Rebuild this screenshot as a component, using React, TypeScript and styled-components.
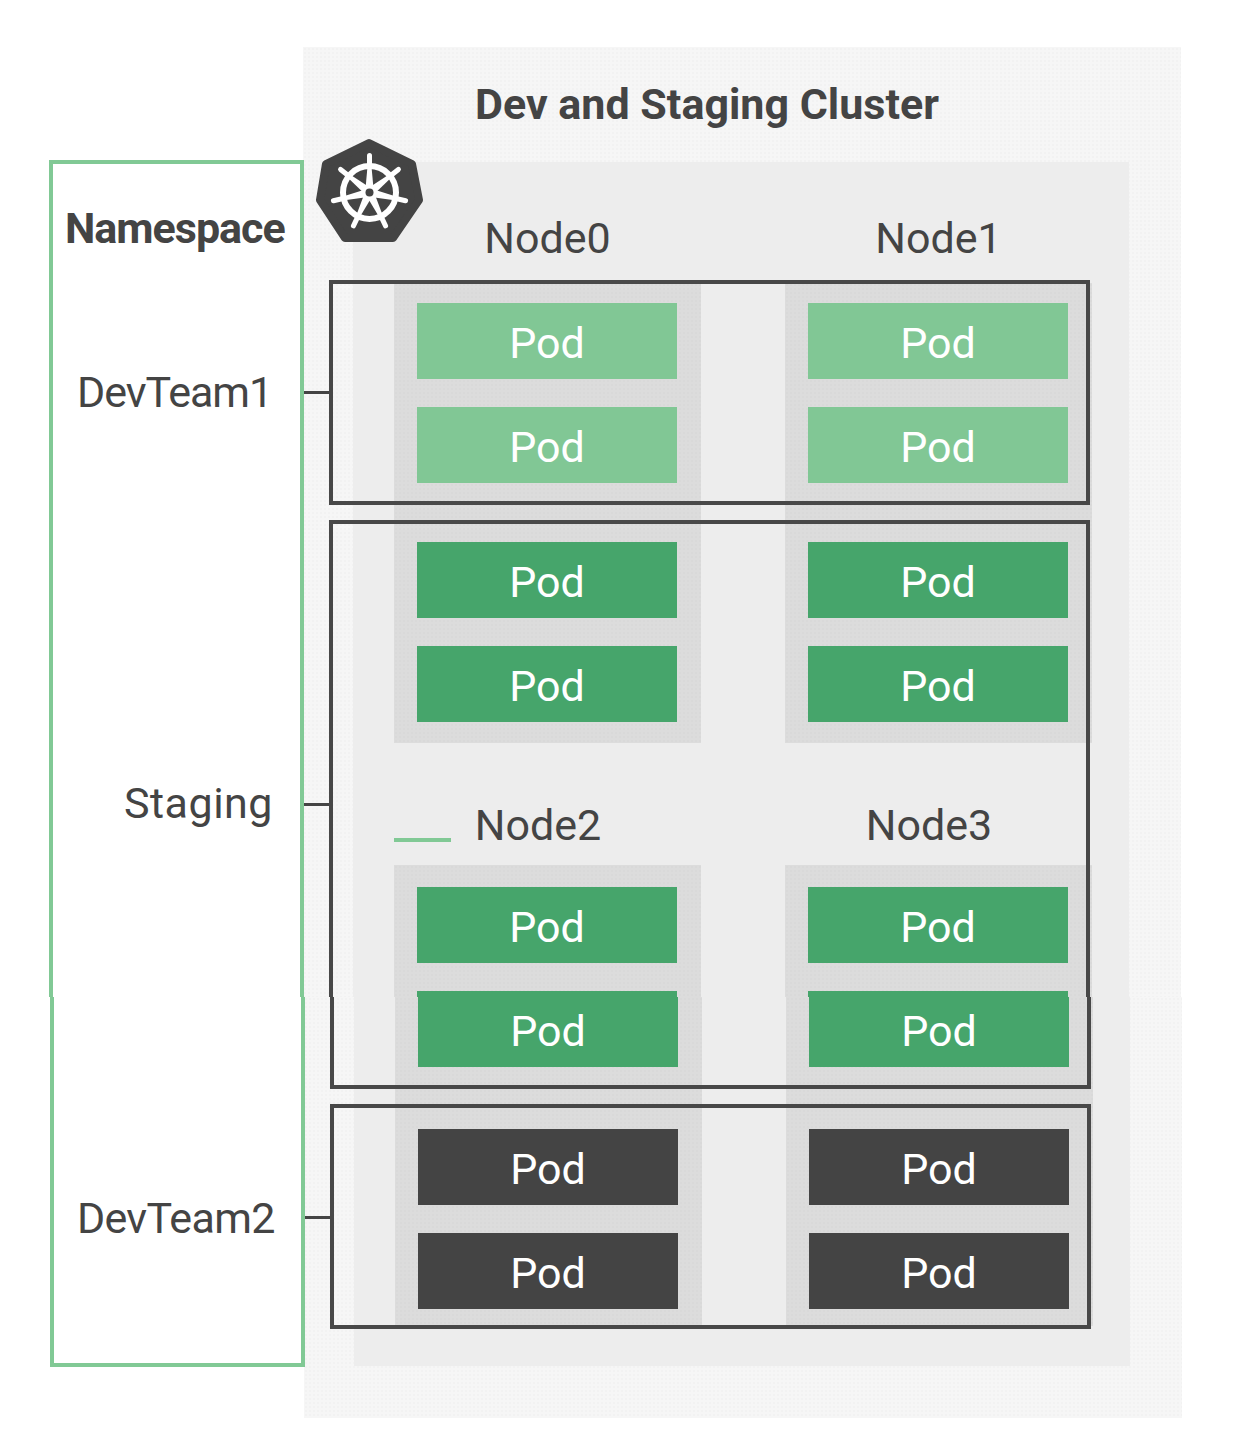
import React from 'react';
import styled, { createGlobalStyle } from 'styled-components';

const GlobalStyle = createGlobalStyle`
  html, body {
    margin: 0;
    padding: 0;
    background: #ffffff;
    font-family: Roboto, "Liberation Sans", sans-serif;
    color: #444444;
  }
`;

const dots = `radial-gradient(rgba(0, 0, 0, 0.014) 1px, transparent 1px)`;

// the source picture is two pieces with a 1px shift at y=997, so the page is two slices
const Slice = styled.section<{ $height: number; $lower?: boolean }>`
  position: relative;
  display: flex;
  align-items: flex-start;
  box-sizing: border-box;
  width: 1236px;
  height: ${({ $height }) => $height}px;
  margin-left: ${({ $lower }) => ($lower ? 1 : 0)}px;
  padding: ${({ $lower }) => ($lower ? 0 : 47)}px 0 0 49px;
  overflow: hidden;
`;

const Namespace = styled.div<{ $lower?: boolean }>`
  position: relative;
  z-index: 1;
  flex: none;
  display: flex;
  flex-direction: column;
  box-sizing: border-box;
  width: 255px;
  height: ${({ $lower }) => ($lower ? '370px' : '1000px')};
  margin-top: ${({ $lower }) => ($lower ? 0 : 113)}px;
  margin-right: -1px;
  border: 4px solid #81c995;
  border-top-width: ${({ $lower }) => ($lower ? 0 : 4)}px;
  border-bottom-width: ${({ $lower }) => ($lower ? 4 : 0)}px;
`;

const NamespaceTitle = styled.div`
  margin: 39px 0 0 12px;
  font-size: 43px;
  line-height: 50px;
  font-weight: 700;
  letter-spacing: -1px;
  white-space: nowrap;
`;

const TeamLabel = styled.div<{ $top: number; $left: number; $spacing?: number }>`
  margin: ${({ $top }) => $top}px 0 0 ${({ $left }) => $left}px;
  font-size: 43px;
  line-height: 50px;
  letter-spacing: ${({ $spacing }) => $spacing ?? 0}px;
  white-space: nowrap;
`;

const Cluster = styled.div<{ $lower?: boolean }>`
  flex: none;
  box-sizing: border-box;
  width: 878px;
  height: ${({ $lower }) => ($lower ? '421px' : '1000px')};
  background-color: #f6f6f6;
  background-image: ${dots};
  background-size: 4px 4px;
`;

const ClusterTitle = styled.h1`
  display: flex;
  align-items: center;
  box-sizing: border-box;
  height: 115px;
  margin: 0;
  padding: 0 0 2px 172px;
  font-size: 43px;
  font-weight: 700;
  color: #444444;
  white-space: nowrap;
`;

const InnerPanel = styled.div<{ $height?: number }>`
  box-sizing: border-box;
  width: 776px;
  height: ${({ $height }) => ($height ? `${$height}px` : '900px')};
  margin-left: 50px;
  padding-left: 41px;
  background: #ededed;
`;

const NodeGrid = styled.div`
  display: grid;
  grid-template-columns: 307px 307px;
  column-gap: 84px;
`;

const NodeColumn = styled.div`
  display: flex;
  flex-direction: column;
`;

const NodeLabel = styled.div<{ $height: number; $pad: number; $shift?: boolean }>`
  display: flex;
  align-items: flex-end;
  justify-content: center;
  box-sizing: border-box;
  height: ${({ $height }) => $height}px;
  padding-bottom: ${({ $pad }) => $pad}px;
  padding-right: ${({ $shift }) => ($shift ? 19 : 0)}px;
  font-size: 43px;
  line-height: 50px;
`;

const NodePanel = styled.div<{ $height: number; $pad: number }>`
  display: flex;
  flex-direction: column;
  align-items: flex-start;
  box-sizing: border-box;
  height: ${({ $height }) => $height}px;
  padding: ${({ $pad }) => $pad}px 0 0 23px;
  background-color: #dcdcdc;
  background-image: ${dots};
  background-size: 4px 4px;
`;

const podColors = { light: '#81c795', mid: '#46a56b', dark: '#444444' };

const Pod = styled.div<{ $tone: keyof typeof podColors; $height?: number; $gap?: number }>`
  flex: none;
  display: flex;
  align-items: center;
  justify-content: center;
  box-sizing: border-box;
  width: 260px;
  height: ${({ $height }) => $height ?? 76}px;
  margin-bottom: ${({ $gap }) => $gap ?? 28}px;
  padding: ${({ $height }) => ($height === 70 ? '0 0 2px' : '4px 0 0')};
  background: ${({ $tone }) => podColors[$tone]};
  color: #ffffff;
  font-size: 43px;
  line-height: 60px;
`;

const TeamFrame = styled.div<{ $top: number; $height: number }>`
  position: absolute;
  left: 329px;
  top: ${({ $top }) => $top}px;
  z-index: 2;
  box-sizing: border-box;
  width: 761px;
  height: ${({ $height }) => $height}px;
  border: 4px solid #484848;
`;

const Tick = styled.span<{ $top: number }>`
  position: absolute;
  left: -29px;
  top: ${({ $top }) => $top}px;
  width: 25px;
  height: 3px;
  background: #444444;
`;

const NodeMark = styled.span`
  position: absolute;
  left: 394px;
  top: 838px;
  width: 57px;
  height: 4px;
  background: #81c995;
`;

const LogoWrap = styled.div`
  position: absolute;
  left: 316px;
  top: 138px;
  z-index: 3;
  width: 108px;
  height: 106px;
`;

const spokes = [0, 1, 2, 3, 4, 5, 6].map((i) => (i * 360) / 7);

const KubeLogo = () => (
  <LogoWrap>
    <svg width="108" height="106" viewBox="0 0 108 106">
      <polygon
        points="53,5 96,26 103,62 77,100 29,100 4,62 10,26"
        fill="#444444"
        stroke="#444444"
        strokeWidth="8"
        strokeLinejoin="round"
      />
      <g transform="translate(53.5 54.5)">
        <circle r="26.5" fill="none" stroke="#ffffff" strokeWidth="6" />
        {spokes.map((angle) => (
          <g key={angle} transform={`rotate(${angle})`}>
            <path d="M-3.8 -6 L-2 -26 L2 -26 L3.8 -6 Z" fill="#ffffff" />
            <line x1="0" y1="-26" x2="0" y2="-37" stroke="#ffffff" strokeWidth="5" strokeLinecap="round" />
          </g>
        ))}
        <circle r="8" fill="#ffffff" />
        <circle r="4" fill="#444444" />
      </g>
    </svg>
  </LogoWrap>
);

const App: React.FC = () => {
  const upperColumn = (first: string, second: string, col: number) => (
    <NodeColumn key={col}>
      <NodeLabel $height={121} $pad={20}>{first}</NodeLabel>
      <NodePanel $height={460} $pad={20}>
        <Pod $tone="light">Pod</Pod>
        <Pod $tone="light" $gap={59}>Pod</Pod>
        <Pod $tone="mid">Pod</Pod>
        <Pod $tone="mid">Pod</Pod>
      </NodePanel>
      <NodeLabel $height={122} $pad={15} $shift>{second}</NodeLabel>
      <NodePanel $height={200} $pad={22}>
        <Pod $tone="mid">Pod</Pod>
        <Pod $tone="mid" />
      </NodePanel>
    </NodeColumn>
  );

  const lowerColumn = (col: number) => (
    <NodePanel key={col} $height={329} $pad={0}>
      <Pod $tone="mid" $height={70} $gap={62}>Pod</Pod>
      <Pod $tone="dark">Pod</Pod>
      <Pod $tone="dark">Pod</Pod>
    </NodePanel>
  );

  return (
    <>
      <GlobalStyle />
      <Slice $height={997}>
        <Namespace>
          <NamespaceTitle>Namespace</NamespaceTitle>
          <TeamLabel $top={114} $left={24} $spacing={-1}>DevTeam1</TeamLabel>
          <TeamLabel $top={361} $left={71} $spacing={0.5}>Staging</TeamLabel>
        </Namespace>
        <Cluster>
          <ClusterTitle>Dev and Staging Cluster</ClusterTitle>
          <InnerPanel>
            <NodeGrid>
              {upperColumn('Node0', 'Node2', 0)}
              {upperColumn('Node1', 'Node3', 1)}
            </NodeGrid>
          </InnerPanel>
        </Cluster>
        <KubeLogo />
        <NodeMark />
        <TeamFrame $top={280} $height={225}>
          <Tick $top={107} />
        </TeamFrame>
        <TeamFrame $top={520} $height={600}>
          <Tick $top={279} />
        </TeamFrame>
      </Slice>
      <Slice $height={457} $lower>
        <Namespace $lower>
          <TeamLabel $top={196} $left={23} $spacing={-0.7}>DevTeam2</TeamLabel>
        </Namespace>
        <Cluster $lower>
          <InnerPanel $height={369}>
            <NodeGrid>
              {lowerColumn(0)}
              {lowerColumn(1)}
            </NodeGrid>
          </InnerPanel>
        </Cluster>
        <TeamFrame $top={-200} $height={292} />
        <TeamFrame $top={107} $height={225}>
          <Tick $top={108} />
        </TeamFrame>
      </Slice>
    </>
  );
};

export default App;
